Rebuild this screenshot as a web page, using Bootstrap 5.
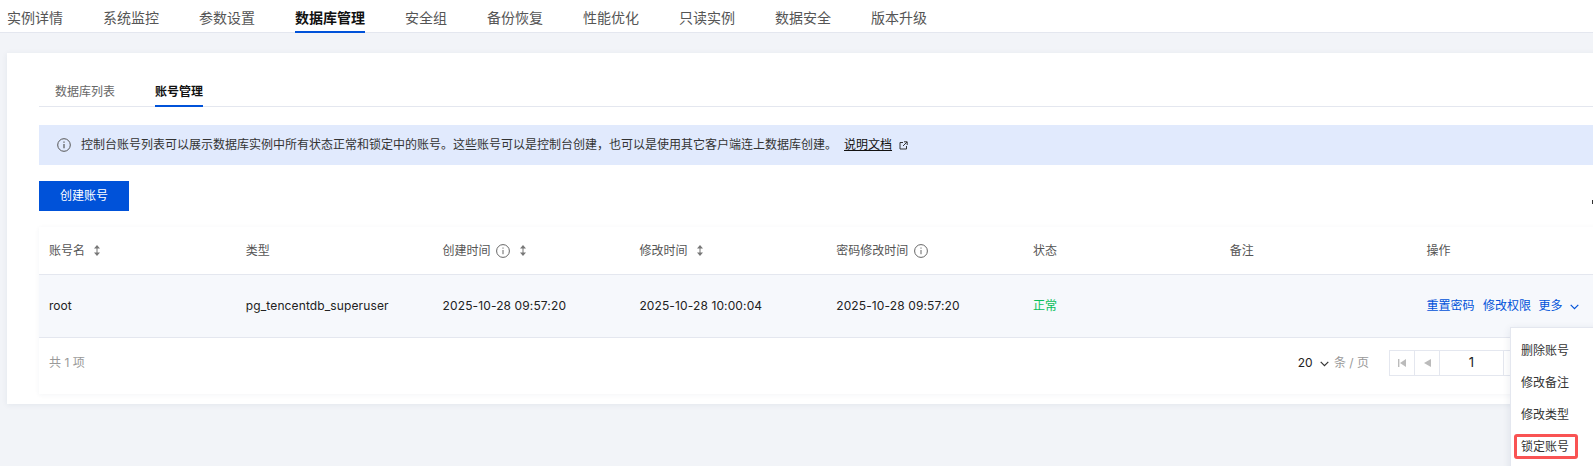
<!DOCTYPE html>
<html lang="zh-CN"><head><meta charset="utf-8"><title>账号管理</title>
<link href="https://cdn.jsdelivr.net/npm/bootstrap@5.3.0/dist/css/bootstrap.min.css" rel="stylesheet">
<style>
html,body{height:466px;overflow:hidden}
body{background:#f2f4f8;font-family:Inter,"Noto Sans CJK SC",sans-serif;font-size:12px;color:#222;position:relative}
.topbar{height:33px;background:#fff;border-bottom:1px solid #e4e7ef;padding-left:7px;gap:40px}
.topbar .nav-link{padding:0;height:32.5px;line-height:36px;font-size:14px;color:#555;border-bottom:2px solid transparent}
.topbar .nav-link.active{color:#111;font-weight:600;border-bottom-color:#0052d9}
.panel{margin:20px -40px 0 7px;height:351px;background:#fff;padding:32px 0 0 32px;box-shadow:0 1px 6px rgba(30,50,90,.07)}
.subtabs{height:22px;border-bottom:1px solid #e4e7ef;padding-left:16px;gap:40px}
.subtabs .nav-link{padding:0;height:22px;line-height:14px;color:#666;border-bottom:2px solid transparent}
.subtabs .nav-link.active{color:#111;font-weight:600;border-bottom-color:#0052d9}
.notice{height:40px;margin:18px 0 0;padding:0 0 0 18px;background:#e1eafd;border:0;border-radius:0;color:#333;gap:7px}
.notice>svg:first-child{margin-right:3px}
.notice a{color:#111}
.create{margin-top:16px;width:90px;height:30px;padding:0;border:0;border-radius:0;background:#0052d9;color:#fff;font-size:12px}
.sheet{margin-top:16px;background:#fff;box-shadow:0 1px 5px rgba(30,50,90,.05)}
.acct{table-layout:fixed;width:1574.4px;margin:0;font-size:12px}
.acct th,.acct td{padding:0 0 0 10px;border-bottom:1px solid #e4e7ef;vertical-align:middle;white-space:nowrap}
.acct th{height:47.5px;color:#555;font-weight:400;background:#fff}
.acct td{height:63px;background:#f6f8fc;color:#222;box-shadow:none}
.acct td.ok-state{color:#0abf5b}
.acct td.wide-latin{letter-spacing:.12px}
.act{color:#0052d9;text-decoration:none;margin-right:8.5px}
.act.last-act{margin-right:0;margin-left:-1px}
.tip{color:#666;vertical-align:-3px;margin-left:2px}
.sortic{color:#777;vertical-align:-1px;margin-left:6px}
.tip + .sortic{margin-left:10px}
.foot{height:56px;padding:0 78px 6px 10px;color:#999}
.per{color:#222;margin-right:20px}
.per span{color:#999;margin-left:5px}
.pager{height:25.5px;border:1px solid #e4e7ef;color:#222}
.pager>span{width:25px;border-right:1px solid #e4e7ef;display:flex;align-items:center;justify-content:center;color:#bbb}
.pager>span.pnum{width:64px;color:#222;font-size:13px}
.pop{position:absolute;left:1510px;top:326.5px;width:90px;height:146px;background:#fff;border:1px solid #e4e7ef;box-shadow:0 2px 8px rgba(30,50,90,.1);padding:0 0 0 10px;color:#333}
.pop .dropdown-item{padding:0;height:32px;line-height:46px;color:#333;font-size:12px;background:none}
.hilite{position:absolute;left:1514px;top:434px;width:63.5px;height:25px;border:3px solid #f95353;border-radius:3px;pointer-events:none}
.speck{position:absolute;left:1592px;top:200px;width:1px;height:4px;background:#333}
</style></head><body>
<ul class="nav topbar flex-nowrap">
<li class="nav-item"><a class="nav-link" href="#">实例详情</a></li>
<li class="nav-item"><a class="nav-link" href="#">系统监控</a></li>
<li class="nav-item"><a class="nav-link" href="#">参数设置</a></li>
<li class="nav-item"><a class="nav-link active" href="#">数据库管理</a></li>
<li class="nav-item"><a class="nav-link" href="#">安全组</a></li>
<li class="nav-item"><a class="nav-link" href="#">备份恢复</a></li>
<li class="nav-item"><a class="nav-link" href="#">性能优化</a></li>
<li class="nav-item"><a class="nav-link" href="#">只读实例</a></li>
<li class="nav-item"><a class="nav-link" href="#">数据安全</a></li>
<li class="nav-item"><a class="nav-link" href="#">版本升级</a></li>
</ul>
<div class="panel">
<ul class="nav subtabs flex-nowrap">
<li class="nav-item"><a class="nav-link" href="#">数据库列表</a></li>
<li class="nav-item"><a class="nav-link active" href="#">账号管理</a></li>
</ul>
<div class="alert notice d-flex align-items-center">
<svg width="14" height="14" viewBox="0 0 14 14" fill="none" stroke="#555"><circle cx="7" cy="7" r="6.3"/><path d="M7 6v4.2M7 3.6v1.2" stroke-width="1.2"/></svg>
<span>控制台账号列表可以展示数据库实例中所有状态正常和锁定中的账号。这些账号可以是控制台创建，也可以是使用其它客户端连上数据库创建。</span>
<a href="#">说明文档</a>
<svg width="9" height="9" viewBox="0 0 9 9" fill="none" stroke="#333"><path d="M4 1.5H1v6.5h6.5V5M5 .8h3.2V4M8 1 4 5"/></svg>
</div>
<button type="button" class="btn create d-block">创建账号</button>
<div class="sheet">
<table class="table acct">
<colgroup><col style="width:196.8px"><col style="width:196.8px"><col style="width:196.8px"><col style="width:196.8px"><col style="width:196.8px"><col style="width:196.8px"><col style="width:196.8px"><col style="width:196.8px"></colgroup>
<thead><tr>
<th>账号名 <svg class="sortic" width="6" height="11" viewBox="0 0 6 11" fill="currentColor"><path d="M3 0 6 3.5H0ZM3 11 0 7.5h6ZM2.5 3h1v5h-1Z"/></svg></th>
<th>类型</th>
<th>创建时间 <svg class="tip" width="14" height="14" viewBox="0 0 14 14" fill="none" stroke="currentColor"><circle cx="7" cy="7" r="6.4"/><path d="M7 6v4.2M7 3.5v1.2"/></svg><svg class="sortic" width="6" height="11" viewBox="0 0 6 11" fill="currentColor"><path d="M3 0 6 3.5H0ZM3 11 0 7.5h6ZM2.5 3h1v5h-1Z"/></svg></th>
<th>修改时间 <svg class="sortic" width="6" height="11" viewBox="0 0 6 11" fill="currentColor"><path d="M3 0 6 3.5H0ZM3 11 0 7.5h6ZM2.5 3h1v5h-1Z"/></svg></th>
<th>密码修改时间 <svg class="tip" width="14" height="14" viewBox="0 0 14 14" fill="none" stroke="currentColor"><circle cx="7" cy="7" r="6.4"/><path d="M7 6v4.2M7 3.5v1.2"/></svg></th>
<th>状态</th><th>备注</th><th>操作</th>
</tr></thead>
<tbody><tr>
<td>root</td><td class="wide-latin">pg_tencentdb_superuser</td><td class="wide-latin">2025-10-28 09:57:20</td><td class="wide-latin">2025-10-28 10:00:04</td><td class="wide-latin">2025-10-28 09:57:20</td>
<td class="ok-state">正常</td><td></td>
<td><a class="act" href="#">重置密码</a><a class="act" href="#">修改权限</a><a class="act last-act" href="#">更多 <svg class="ms-1" width="9" height="6" viewBox="0 0 9 6" fill="none" stroke="currentColor" stroke-width="1.2"><path d="M.7.9 4.5 4.7 8.3.9"/></svg></a></td>
</tr></tbody>
</table>
<div class="foot d-flex align-items-center justify-content-between">
<span>共 1 项</span>
<div class="d-flex align-items-center">
<div class="per">20 <svg class="ms-1" width="9" height="6" viewBox="0 0 9 6" fill="none" stroke="#333" stroke-width="1.2"><path d="M.7.9 4.5 4.7 8.3.9"/></svg><span>条 / 页</span></div>
<div class="pager d-flex">
<span><svg width="8" height="8" viewBox="0 0 8 8" fill="currentColor"><path d="M0 0h1.4v8H0ZM8 0v8L2 4Z"/></svg></span>
<span><svg width="7" height="8" viewBox="0 0 7 8" fill="currentColor"><path d="M7 0v8L0 4Z"/></svg></span>
<span class="pnum">1</span>
<span><svg width="7" height="8" viewBox="0 0 7 8" fill="currentColor"><path d="M0 0v8l7-4Z"/></svg></span>
<span class="border-0"><svg width="8" height="8" viewBox="0 0 8 8" fill="currentColor"><path d="M8 0H6.6v8H8ZM0 0v8l6-4Z"/></svg></span>
</div>
</div>
</div>
</div>
</div>
<div class="pop">
<a class="dropdown-item" href="#">删除账号</a>
<a class="dropdown-item" href="#">修改备注</a>
<a class="dropdown-item" href="#">修改类型</a>
<a class="dropdown-item" href="#">锁定账号</a>
</div>
<div class="hilite"></div>
<div class="speck"></div>
<script src="https://cdn.jsdelivr.net/npm/bootstrap@5.3.0/dist/js/bootstrap.bundle.min.js"></script>
</body></html>
